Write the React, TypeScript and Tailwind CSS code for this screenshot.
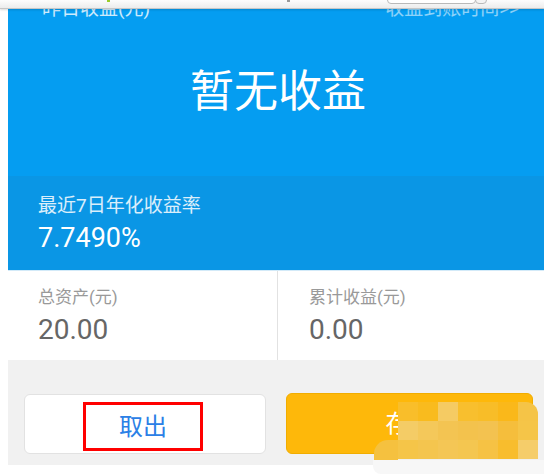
const mosaicRows = [
  ['#f9be2a', '#f9bb1e', '#f5cb63', '#f8bf2e', '#f8bd28', '#fab81a', '#f5c447'],
  ['#f4cc66', '#f4c85a', '#f3c452', '#f3c24d', '#f3c250', '#f5be3c', '#f5c548'],
  ['#f5c548', '#f4c54e', '#f4c655', '#f4c650', '#f6c244', '#f8bd2d', '#f5cd6a'],
];

function BrowserBar() {
  return (
    <div className="absolute top-0 left-0 w-full h-[9px] bg-gradient-to-b from-[#fdfdfd] to-[#ececec] border-b border-[#c6c6c6] shadow-[0_1px_2px_rgba(0,0,0,0.15)]">
      <div className="absolute left-[107px] top-0 w-[3px] h-[2px] bg-[#9bcc2a]" />
      <div className="absolute left-[287px] top-0 w-[3px] h-[2px] bg-[#9a9a9a]" />
      <div className="absolute left-[387px] -top-[4px] w-[89px] h-[8px] bg-white border border-[#b9b9b9] rounded-sm" />
      <div className="absolute left-[475px] -top-[4px] w-[12px] h-[8px] bg-[#f4f4f4] border border-[#b9b9b9] rounded-sm" />
    </div>
  );
}

// blurred watermark over the deposit button
function Mosaic() {
  return (
    <>
      <div className="absolute left-[398px] top-[402px] flex flex-col">
        {mosaicRows.map((row, i) => (
          <div key={i} className="flex">
            {row.map((c, j) => (
              <div
                key={j}
                className={j === row.length - 1 && i === 0 ? 'w-[20px] h-[19px] rounded-tr-[12px]' : 'w-[20px] h-[19px]'}
                style={{ backgroundColor: c }}
              />
            ))}
          </div>
        ))}
      </div>
      <div className="absolute left-[374px] top-[440px] w-[24px] h-[20px] bg-[#f5c13f] rounded-tl-[14px]" />
      <div className="absolute left-[373px] top-[460px] w-[171px] h-[14px] bg-[#f7f7f7] rounded-bl-[8px]" />
    </>
  );
}

export default function App() {
  return (
    <div
      className="relative w-[544px] h-[474px] overflow-hidden bg-white"
      style={{ fontFamily: 'Roboto, "Noto Sans CJK SC", sans-serif' }}
    >
      <div className="ml-2 w-[540px]">
        {/* Header */}
        <div className="h-[176px] bg-[#059df1] flex flex-col">
          <div className="flex justify-between pl-[34px] pr-[29px] -mt-[3px] h-[24px] leading-[24px] text-[19px]">
            <span className="text-white/80">昨日收益(元)</span>
            <span className="text-white/55">收益到账时间&gt;&gt;</span>
          </div>
          <div className="mt-[39px] text-center text-white text-[44px] leading-[64px]">暂无收益</div>
        </div>

        {/* Rate */}
        <div className="h-[94px] bg-[#0a96e5] px-[30px] pt-[18px]">
          <div className="text-[19px] leading-[24px] text-white/85">最近7日年化收益率</div>
          <div className="mt-[4px] text-[27px] leading-[32px] text-white">7.7490%</div>
        </div>

        {/* Stats */}
        <div className="flex h-[90px] bg-white border-t border-[#d3eaf8]">
          <div className="w-[270px] border-r border-[#e2e2e2] px-[30px] pt-[14px]">
            <div className="text-[17px] leading-[24px] text-[#999999]">总资产(元)</div>
            <div className="mt-[3px] text-[28px] leading-[36px] text-[#666666]">20.00</div>
          </div>
          <div className="flex-1 px-[31px] pt-[14px]">
            <div className="text-[17px] leading-[24px] text-[#999999]">累计收益(元)</div>
            <div className="mt-[3px] text-[28px] leading-[36px] text-[#666666]">0.00</div>
          </div>
        </div>

        {/* Actions */}
        <div className="h-[105px] bg-[#f1f1f1] flex gap-5 pl-4 pr-[15px] pt-[34px]">
          <button className="w-[242px] h-[60px] bg-white border border-[#e2e2e2] rounded-md flex justify-start items-start pt-[7px] pl-[58px]">
            <span className="w-[120px] h-[49px] border-[3px] border-[#ff0000] flex items-center justify-center text-[24px] text-[#2b80e6]">
              取出
            </span>
          </button>
          <button className="flex-1 h-[61px] -mt-px bg-[#feb80a] border border-[#f1ad00] rounded-md flex items-center justify-center text-[24px] text-white">
            存入
          </button>
        </div>
      </div>

      <Mosaic />
      <BrowserBar />
    </div>
  );
}
